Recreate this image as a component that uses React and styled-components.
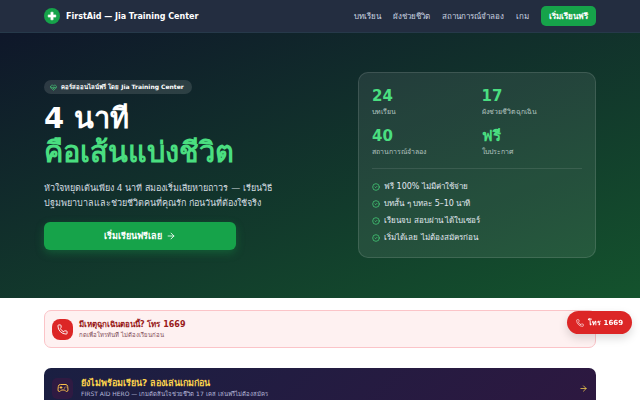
import React from 'react';
import styled, { createGlobalStyle } from 'styled-components';
import { ArrowRight, CircleCheck, Gamepad2, HeartPulse, Phone } from 'lucide-react';

const stats = [
    { value: '24', label: 'บทเรียน' },
    { value: '17', label: 'ผังช่วยชีวิตฉุกเฉิน' },
    { value: '40', label: 'สถานการณ์จำลอง' },
    { value: 'ฟรี', label: 'ใบประกาศ' },
];

const perks = [
    'ฟรี 100% ไม่มีค่าใช้จ่าย',
    'บทสั้น ๆ บทละ 5–10 นาที',
    'เรียนจบ สอบผ่าน ได้ใบเซอร์',
    'เริ่มได้เลย ไม่ต้องสมัครก่อน',
];

const links = ['บทเรียน', 'ผังช่วยชีวิต', 'สถานการณ์จำลอง', 'เกม'];

function App() {
    return (
        <>
            <GlobalStyle />
            <HeaderStyled>
                <Brand href="#">
                    <Logo viewBox="0 0 16 16" aria-hidden="true">
                        <circle cx="8" cy="8" r="8" fill="#16a34a" />
                        <path d="M6.9 4.2h2.2v2.7h2.7v2.2H9.1v2.7H6.9V9.1H4.2V6.9h2.7z" fill="#fff" stroke="#fff" strokeWidth=".6" strokeLinejoin="round" />
                    </Logo>
                    FirstAid — Jia Training Center
                </Brand>
                <Nav>
                    {links.map((link) => (
                        <NavLink href="#" key={link}>{link}</NavLink>
                    ))}
                    <NavButton>เริ่มเรียนฟรี</NavButton>
                </Nav>
            </HeaderStyled>

            <HeroStyled>
                <Intro>
                    <Badge>
                        <HeartPulse size={7} color="#4ade80" />
                        คอร์สออนไลน์ฟรี โดย Jia Training Center
                    </Badge>
                    <Title>
                        4 นาที
                        <span>คือเส้นแบ่งชีวิต</span>
                    </Title>
                    <Lead>
                        หัวใจหยุดเต้นเพียง 4 นาที สมองเริ่มเสียหายถาวร — เรียนวิธี
                        ปฐมพยาบาลและช่วยชีวิตคนที่คุณรัก ก่อนวันที่ต้องใช้จริง
                    </Lead>
                    <StartButton>
                        เริ่มเรียนฟรีเลย
                        <ArrowRight size={10} />
                    </StartButton>
                </Intro>
                <StatsCard>
                    <StatsGrid>
                        {stats.map((stat) => (
                            <div key={stat.label}>
                                <StatValue>{stat.value}</StatValue>
                                <StatLabel>{stat.label}</StatLabel>
                            </div>
                        ))}
                    </StatsGrid>
                    <PerkList>
                        {perks.map((perk) => (
                            <li key={perk}>
                                <CircleCheck size={8} color="#4ade80" />
                                {perk}
                            </li>
                        ))}
                    </PerkList>
                </StatsCard>
            </HeroStyled>

            <Main>
                <EmergencyLink href="tel:1669">
                    <IconBox $bg="#dc2626" $round>
                        <Phone size={11} color="#fff" />
                    </IconBox>
                    <div>
                        <BannerTitle $color="#991b1b">มีเหตุฉุกเฉินตอนนี้? โทร 1669</BannerTitle>
                        <BannerText $color="#7f4a55">กดเพื่อโทรทันที ไม่ต้องเรียนก่อน</BannerText>
                    </div>
                </EmergencyLink>
                <GameLink href="#">
                    <IconBox $bg="#2f1a42">
                        <Gamepad2 size={12} color="#fbbf4a" />
                    </IconBox>
                    <div>
                        <BannerTitle $color="#fcd34d" $large>ยังไม่พร้อมเรียน? ลองเล่นเกมก่อน</BannerTitle>
                        <BannerText $color="#b6b8da">FIRST AID HERO — เกมตัดสินใจช่วยชีวิต 17 เคส เล่นฟรีไม่ต้องสมัคร</BannerText>
                    </div>
                    <ArrowRight className="arrow" size={9} color="#fcd34d" />
                </GameLink>
            </Main>

            <CallButton href="tel:1669">
                <Phone size={8} />
                โทร 1669
            </CallButton>
        </>
    );
}

const GlobalStyle = createGlobalStyle`
    *{
        box-sizing: border-box;
        margin: 0;
        padding: 0;
    }

    body{
        background: #fff;
        font-family: "DejaVu Sans", sans-serif;
        font-size: 8px;
        overflow: hidden;
    }

    a{
        color: inherit;
        text-decoration: none;
    }

    button{
        border: none;
        color: #fff;
        font-family: inherit;
        font-weight: 700;
        cursor: pointer;
    }

    svg{
        flex-shrink: 0;
    }
`;

const HeaderStyled = styled.header`
    display: flex;
    align-items: center;
    justify-content: space-between;
    height: 33px;
    padding: 0 44px;
    background: #232d40;
    border-bottom: 1px solid #26394a;
`;

const Brand = styled.a`
    display: flex;
    align-items: center;
    gap: 6px;
    color: #fff;
    font-weight: 700;
`;

const Logo = styled.svg`
    width: 16px;
    height: 16px;
`;

const Nav = styled.nav`
    display: flex;
    align-items: center;
    gap: 12px;
`;

const NavLink = styled.a`
    color: #cbd5e1;
`;

const NavButton = styled.button`
    height: 20px;
    padding: 0 8px;
    border-radius: 5px;
    background: #16a34a;
    font-size: 8px;
`;

const HeroStyled = styled.section`
    display: grid;
    grid-template-columns: 1fr 238px;
    align-items: center;
    gap: 32px;
    padding: 39px 44px 40px;
    background: linear-gradient(160deg, #0f172a 0%, #14532d 100%);
`;

const Intro = styled.div`
    display: flex;
    flex-direction: column;
    align-items: flex-start;
`;

const Badge = styled.p`
    display: flex;
    align-items: center;
    gap: 4px;
    height: 14px;
    padding: 0 8px 0 6px;
    border-radius: 7px;
    background: rgba(255, 255, 255, 0.12);
    color: #fff;
    font-size: 6px;
    font-weight: 700;
`;

const Title = styled.h1`
    margin-top: 7px;
    color: #fff;
    font-size: 29px;
    font-weight: 800;
    line-height: 34px;

    span{
        display: block;
        color: #4ade80;
    }
`;

const Lead = styled.p`
    max-width: 240px;
    margin-top: 12px;
    color: #d3dde0;
    font-size: 9px;
    line-height: 15px;
`;

const StartButton = styled.button`
    display: flex;
    align-items: center;
    justify-content: center;
    gap: 4px;
    width: 192px;
    height: 28px;
    margin-top: 11px;
    border-radius: 6px;
    background: #16a34a;
    box-shadow: 0 3px 8px rgba(22, 163, 74, 0.35);
    font-size: 9px;
`;

const StatsCard = styled.div`
    padding: 14px 13px 13px;
    border: 1px solid rgba(255, 255, 255, 0.12);
    border-radius: 10px;
    background: rgba(255, 255, 255, 0.08);
`;

const StatsGrid = styled.div`
    display: grid;
    grid-template-columns: 1fr 1fr;
    gap: 9px;
    padding-bottom: 10px;
    border-bottom: 1px solid rgba(255, 255, 255, 0.1);
`;

const StatValue = styled.p`
    color: #4ade80;
    font-size: 15px;
    font-weight: 800;
    line-height: 19px;
`;

const StatLabel = styled.p`
    color: #b4c4c0;
    font-size: 7px;
    line-height: 12px;
`;

const PerkList = styled.ul`
    display: grid;
    gap: 4px;
    padding-top: 11px;
    list-style: none;

    li{
        display: flex;
        align-items: center;
        gap: 4px;
        color: #e2e8f0;
        font-size: 8px;
        line-height: 13px;
    }
`;

const Main = styled.main`
    display: grid;
    gap: 20px;
    padding: 12px 44px;
`;

const EmergencyLink = styled.a`
    display: flex;
    align-items: center;
    gap: 6px;
    height: 38px;
    padding: 0 7px;
    border: 1px solid #fbc4c8;
    border-radius: 7px;
    background: #fef1f1;
`;

const GameLink = styled.a`
    display: flex;
    align-items: center;
    gap: 8px;
    height: 40px;
    padding: 0 8px;
    border-radius: 7px;
    background: linear-gradient(135deg, #1a1f42, #2d1840);

    .arrow{
        margin-left: auto;
    }
`;

const IconBox = styled.span`
    display: flex;
    align-items: center;
    justify-content: center;
    flex-shrink: 0;
    width: 21px;
    height: 21px;
    border-radius: ${(props) => (props.$round ? '8px' : '5px')};
    background: ${(props) => props.$bg};
`;

const BannerTitle = styled.p`
    color: ${(props) => props.$color};
    font-size: ${(props) => (props.$large ? '9px' : '8px')};
    font-weight: 700;
    line-height: 11px;
`;

const BannerText = styled.p`
    color: ${(props) => props.$color};
    font-size: 6px;
    line-height: 10px;
`;

const CallButton = styled.a`
    position: fixed;
    top: 311px;
    right: 8px;
    display: flex;
    align-items: center;
    gap: 4px;
    height: 23px;
    padding: 0 9px;
    border-radius: 12px;
    background: #dc2626;
    box-shadow: 0 4px 10px rgba(0, 0, 0, 0.15);
    color: #fff;
    font-size: 7px;
    font-weight: 700;
`;

export default App;
